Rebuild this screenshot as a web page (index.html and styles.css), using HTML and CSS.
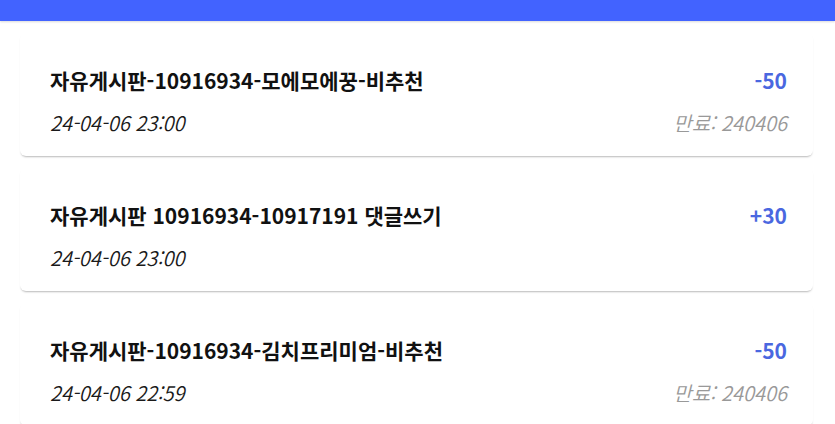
FILE: index.html
```html
<!DOCTYPE html>
<html lang="ko">
<head>
<meta charset="UTF-8">
<meta name="viewport" content="width=device-width, initial-scale=1.0">
<link rel="stylesheet" href="styles.css">
<title>포인트 내역</title>
</head>
<body>
<div class="topbar"></div>

<div class="history">
  <div class="entry">
    <div class="row">
      <span class="title">자유게시판-10916934-모에모에꿍-비추천</span>
      <span class="amount">-50</span>
    </div>
    <div class="row">
      <span class="date">24-04-06 23:00</span>
      <span class="expire">만료: 240406</span>
    </div>
  </div>

  <div class="entry">
    <div class="row">
      <span class="title">자유게시판 10916934-10917191 댓글쓰기</span>
      <span class="amount">+30</span>
    </div>
    <div class="row">
      <span class="date">24-04-06 23:00</span>
    </div>
  </div>

  <div class="entry">
    <div class="row">
      <span class="title">자유게시판-10916934-김치프리미엄-비추천</span>
      <span class="amount">-50</span>
    </div>
    <div class="row">
      <span class="date">24-04-06 22:59</span>
      <span class="expire">만료: 240406</span>
    </div>
  </div>
</div>
</body>
</html>
```

FILE: styles.css
```css
body {
  margin: 0;
  background: #fff;
  font-family: "Noto Sans CJK KR", "Noto Sans", sans-serif;
  color: #111;
}

.topbar {
  height: 21px;
  background: #4263ff;
  box-shadow: 0 1px 2px rgba(0, 0, 0, 0.15);
}

.history {
  display: flex;
  flex-direction: column;
  gap: 12px;
  padding: 12px 22px 0 20px;
}

.entry {
  display: flex;
  flex-direction: column;
  gap: 14px;
  padding: 33px 26px 20px 30px;
  background: #fff;
  border-radius: 6px;
  box-shadow: 0 2px 2px -1px rgba(0, 0, 0, 0.28);
}

.row {
  display: flex;
  justify-content: space-between;
  align-items: center;
  height: 28px;
}

.title {
  font-size: 21px;
  font-weight: 700;
}

.amount {
  font-size: 21px;
  font-weight: 700;
  color: #4a67e0;
}

.date {
  font-size: 20px;
  font-weight: 350;
  font-style: italic;
  color: #1a1a1a;
}

.expire {
  font-size: 20px;
  font-weight: 350;
  font-style: italic;
  color: #999;
}
```
